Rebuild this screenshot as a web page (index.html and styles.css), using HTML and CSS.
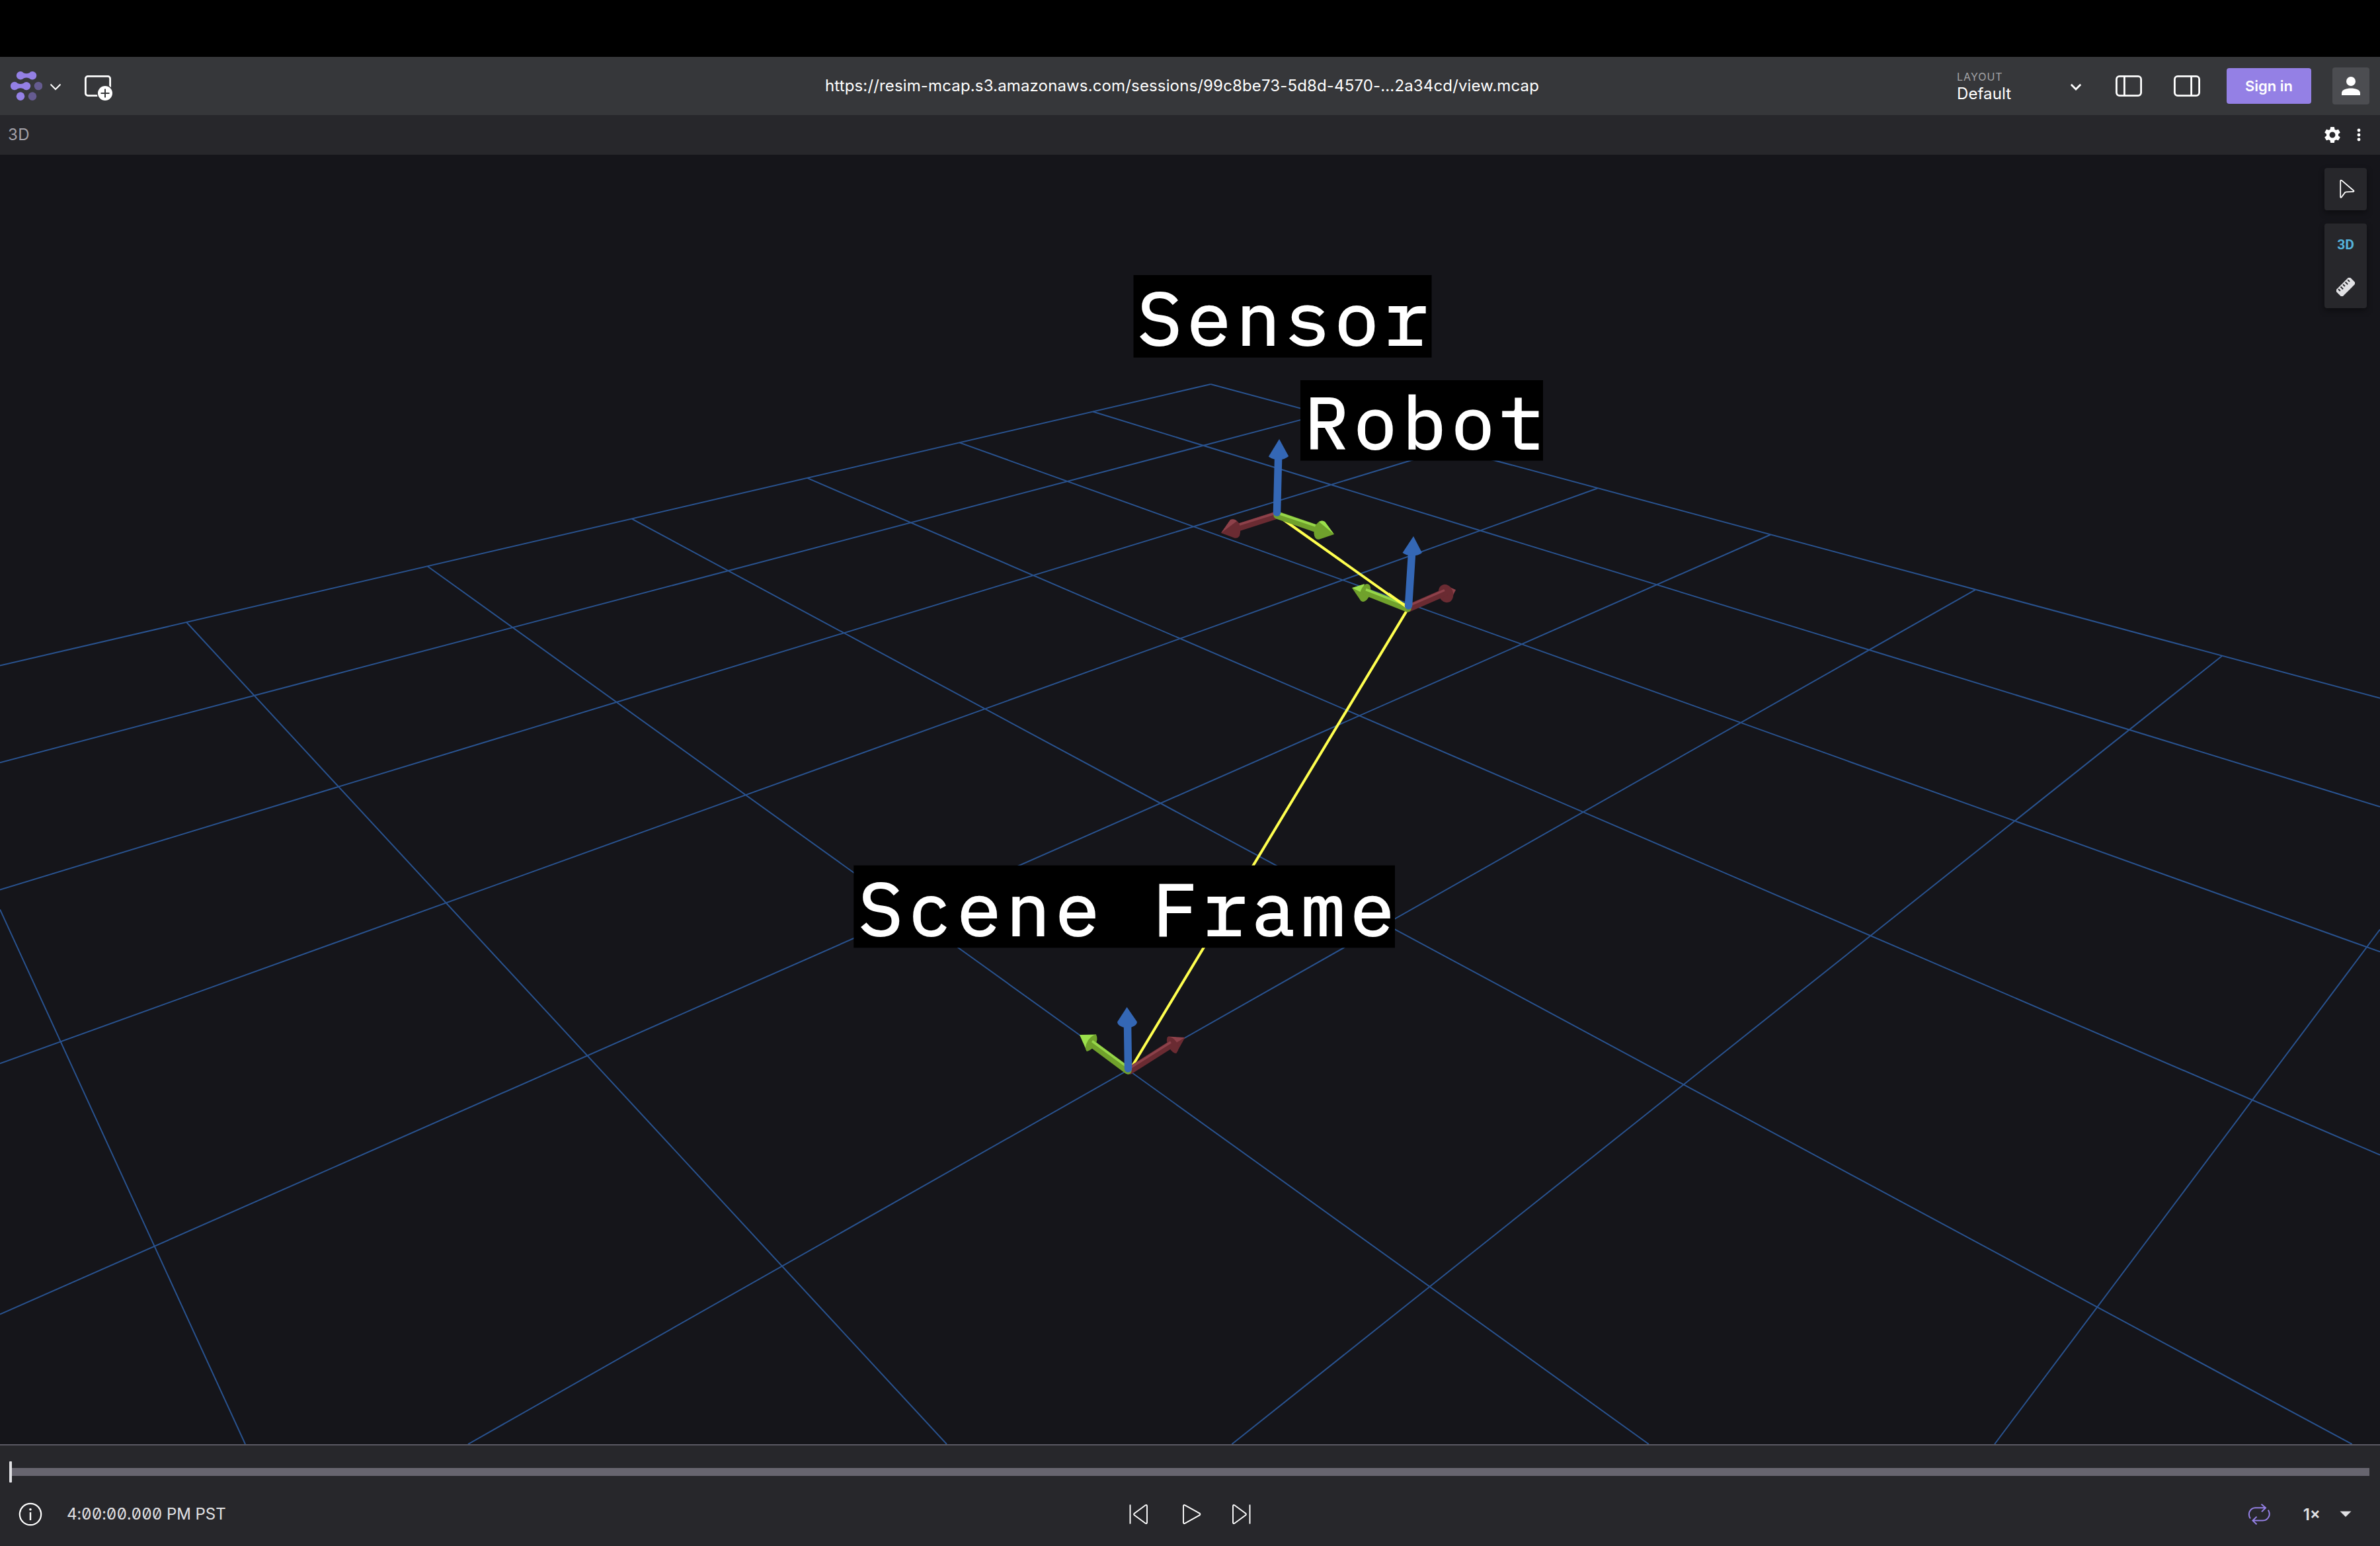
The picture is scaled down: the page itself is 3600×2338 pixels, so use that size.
FILE: index.html
```html
<!DOCTYPE html>
<html lang="en">
<head>
<meta charset="utf-8">
<title>3D view</title>
<link rel="stylesheet" href="styles.css">
</head>
<body>
<div class="app">
  <header class="appbar">
    <div class="appbar-start">
      <svg class="logo" width="48" height="44" viewBox="0 0 48 44">
        <g fill="#9480e5">
          <path d="M15 0a6.2 6.2 0 0 1 4.600 2.200q4.400 2 8.800 0a6.200 6.200 0 1 1 0 8.200q-4.400-2-8.800 0A6.200 6.200 0 1 1 15 0z"/>
          <path d="M6 15.800a6.200 6.200 0 0 1 4.600 2.200q4.400 2 8.800 0a6.200 6.200 0 1 1 0 8.200q-4.400-2-8.800 0A6.200 6.200 0 1 1 6 15.800z"/>
          <circle cx="15" cy="37.600" r="6.300"/>
        </g>
        <g fill="#655b90"><circle cx="42" cy="22" r="6.300"/><circle cx="33" cy="37.600" r="6.300"/></g>
      </svg>
      <svg class="logo-chevron" width="18" height="12" viewBox="0 0 18 12"><path d="M1.500 1.500 9 9 16.500 1.500" fill="none" stroke="#fff" stroke-width="2"/></svg>
      <svg class="add-panel" width="42" height="38" viewBox="0 0 42 38">
        <rect x="1.400" y="1.400" width="37.200" height="29.200" rx="3.500" fill="none" stroke="#fff" stroke-width="2.800"/>
        <circle cx="31" cy="27" r="12.500" fill="#36373a"/><circle cx="31" cy="27" r="11" fill="#fff"/>
        <path d="M31 20.500v13M24.500 27h13" stroke="#36373a" stroke-width="2"/>
      </svg>
    </div>
    <div class="source">https://resim-mcap.s3.amazonaws.com/sessions/99c8be73-5d8d-4570-...2a34cd/view.mcap</div>
    <div class="appbar-end">
      <div class="layout-menu">
        <div class="layout-text"><span class="layout-caption">LAYOUT</span><span class="layout-name">Default</span></div>
        <svg width="18" height="12" viewBox="0 0 18 12"><path d="M1.800 1.800 9 9 16.200 1.800" fill="none" stroke="#fff" stroke-width="2.800"/></svg>
      </div>
      <svg class="side-icon" width="40" height="32" viewBox="0 0 40 32"><rect x="1.400" y="1.400" width="37.200" height="29.200" rx="4.500" fill="none" stroke="#fff" stroke-width="2.800"/><path d="M13.400 1v30" stroke="#fff" stroke-width="2.800"/></svg>
      <svg class="side-icon" width="40" height="32" viewBox="0 0 40 32"><rect x="1.400" y="1.400" width="37.200" height="29.200" rx="4.500" fill="none" stroke="#fff" stroke-width="2.800"/><path d="M26.600 1v30" stroke="#fff" stroke-width="2.800"/></svg>
      <button class="sign-in">Sign in</button>
      <div class="avatar"><svg width="28" height="28" viewBox="0 0 28 28" fill="#fff"><circle cx="14" cy="7" r="7"/><path d="M0 28v-3.500C0 20 7 17.500 14 17.500S28 20 28 24.500V28z"/></svg></div>
    </div>
  </header>

  <div class="panel-bar">
    <span class="panel-title">3D</span>
    <div class="panel-actions">
      <svg width="30" height="30" viewBox="0 0 24 24" fill="#fff"><path d="M19.140 12.940c.04-.3.060-.610.060-.940 0-.320-.020-.640-.070-.940l2.030-1.580a.49.49 0 0 0 .120-.610l-1.920-3.320a.488.488 0 0 0-.590-.220l-2.390.960c-.5-.380-1.030-.700-1.620-.940l-.360-2.540a.484.484 0 0 0-.480-.410h-3.840c-.240 0-.430.170-.470.410l-.360 2.540c-.590.240-1.130.570-1.620.940l-2.390-.960c-.220-.080-.470 0-.590.220L2.740 8.870c-.120.210-.080.470.120.610l2.030 1.580c-.05.300-.090.630-.090.940s.020.640.070.940l-2.030 1.580a.49.49 0 0 0-.120.610l1.920 3.320c.120.220.370.290.590.220l2.390-.960c.5.380 1.030.700 1.620.940l.360 2.540c.05.240.240.410.480.410h3.840c.240 0 .440-.170.470-.410l.360-2.540c.590-.240 1.130-.560 1.620-.940l2.390.960c.220.080.470 0 .590-.220l1.920-3.320c.120-.220.070-.470-.120-.610zM12 15.600A3.610 3.610 0 0 1 8.400 12c0-1.980 1.620-3.600 3.600-3.600s3.600 1.620 3.600 3.600-1.620 3.600-3.600 3.600"/></svg>
      <svg width="6" height="20" viewBox="0 0 6 20" fill="#fff"><circle cx="3" cy="3" r="2.400"/><circle cx="3" cy="10" r="2.400"/><circle cx="3" cy="17" r="2.400"/></svg>
    </div>
  </div>

  <main class="viewport">
    <svg class="scene" viewBox="0 234 3600 1950">
      <g class="grid">
        <path d="M1831.300 581 3600 1055.800"/>
        <path d="M1653.100 622.500 3600 1220"/>
        <path d="M1451.300 669.400 3600 1439.400"/>
        <path d="M1221 722.900 3600 1746.700"/>
        <path d="M955.700 784.700 3557.700 2184"/>
        <path d="M646.800 856.500 2494 2184"/>
        <path d="M282.300 941.300 1432 2184"/>
        <path d="M0 1375.400 371 2184"/>
        <path d="M1831.300 581 0 1006.600"/>
        <path d="M2000.100 626.400 0 1153.200"/>
        <path d="M2193.400 678.300 0 1345.500"/>
        <path d="M2416.900 738.300 0 1608.200"/>
        <path d="M2678.200 808.500 0 1987.500"/>
        <path d="M2988 891.800 708 2184"/>
        <path d="M3361 992 1863.300 2184"/>
        <path d="M3600 1405.700 3017 2184"/>
      </g>
      <path class="link" d="M1933 780 2130 920 1708 1620"/>

      <g class="sensor-axes">
        <path class="red shaft" d="M1931 779 1872 798"/><path class="red lit" d="M1931 775.500 1872 794"/>
        <path class="red head" d="M1847 806 1861 786Q1868 783 1874 791Q1878 800 1875 810Q1872 815 1867 813.500z"/>
        <path class="red-top" d="M1847 806 1861 786Q1867 784 1871 788z"/>
        <path class="green shaft" d="M1932 779 1990 799"/><path class="green lit" d="M1933 776 1990 795"/>
        <path class="green head" d="M2018 808 2004 789Q1997 785 1991 793Q1986 801 1988 810Q1990 817 1996 815.500z"/>
        <path class="green-top" d="M2018 808 2004 789Q2000 786 1995 789z"/>
        <path class="blue shaft" d="M1931.500 775 1933.600 692"/>
        <path class="blue head" d="M1935 664 1949.200 690Q1943 695 1934 695.500Q1925 695 1918.800 690.500z"/>
      </g>

      <g class="robot-axes">
        <path class="red-top" d="M2202 892 2184 884 2193 910z"/>
        <ellipse class="red head" cx="2187" cy="897.500" rx="11" ry="14" transform="rotate(-18 2187 897.500)"/>
        <path class="red shaft" d="M2130 920 2185 896"/><path class="red lit" d="M2131 916 2185 892.500"/>
        <path class="green-top" d="M2045 889 2064 883 2060 900z"/>
        <path class="green head" d="M2045 889 2059 909.500 2068 900z"/>
        <ellipse class="green head" cx="2065" cy="896.500" rx="7.500" ry="14" transform="rotate(18 2065 896.500)"/>
        <path class="green shaft" d="M2129 920 2066 895"/><path class="green lit" d="M2128 915.500 2066 891.500"/>
        <path class="link" d="M2100 898 2128 918"/>
        <path class="blue shaft" d="M2130.500 916 2135.500 838"/>
        <path class="blue head" d="M2138 811 2151 836Q2145 840.500 2136 840.500Q2127 840 2121.500 836z"/>
      </g>

      <g class="scene-axes">
        <path class="red-top" d="M1792.500 1569 1767 1567.500 1775 1585z"/>
        <path class="red head" d="M1792.500 1569 1779 1593 1770 1582z"/>
        <path class="red head" d="M1766 1568Q1773 1567 1779 1575Q1786 1585 1779 1593Q1774 1593 1768 1584Q1763 1574 1766 1568z"/>
        <path class="red shaft" d="M1709 1619 1772 1579"/><path class="red lit" d="M1710 1614.500 1771 1576"/>
        <path class="green-top" d="M1633 1565 1658 1564.500 1644 1590z"/>
        <path class="green head" d="M1658 1564.500Q1662 1572 1656 1581Q1650 1589 1644 1590Q1639 1585 1646 1573Q1652 1565 1658 1564.500z"/>
        <path class="green shaft" d="M1706 1619 1651 1578"/><path class="green lit" d="M1706 1614 1652 1574.500"/>
        <path class="blue shaft" d="M1706.500 1616 1705.500 1548"/>
        <path class="blue head" d="M1704.600 1523 1720 1545.500Q1719 1553 1705 1554.500Q1691 1553 1690 1545.500z"/>
      </g>

      <g class="labels">
        <rect x="1714.500" y="416" width="451" height="124.700"/>
        <text x="1720.500" y="521.500" class="label">Sensor</text>
        <rect x="1967" y="575" width="367" height="121.600"/>
        <text x="1973.500" y="678.500" class="label label-far">Robot</text>
        <rect x="1291.300" y="1308.700" width="818.700" height="124.600"/>
        <text x="1298.500" y="1414.500" class="label label-scene">Scene Frame</text>
      </g>
    </svg>

    <div class="tools">
      <div class="tool-group">
        <div class="tool"><svg class="cursor" width="24" height="30" viewBox="0 0 24 30"><path d="M2.200 2.600v24.200q.3 1.700 1.500.400l5.500-7.300q.5-.600 1.400-.600l10.800-.500q1.800-.4.600-1.600L4.100 1.900Q2.500.9 2.200 2.600z" fill="none" stroke="#fff" stroke-width="1.800" stroke-linejoin="round"/></svg></div>
      </div>
      <div class="tool-group">
        <div class="tool tool-active">3D</div>
        <div class="tool"><svg width="28" height="28" viewBox="0 0 28 28"><g transform="rotate(-45 14 14)"><rect x="-1" y="7" width="30" height="14" rx="2.500" fill="#e1e1e4"/><path d="M4 6.500v6M9 6.500v7M14 6.500v6M19 6.500v7M24 6.500v6" stroke="#27272b" stroke-width="2"/><path d="M1 7.700h26" stroke="#e1e1e4" stroke-width="1.600"/></g></svg></div>
      </div>
    </div>
  </main>

  <footer class="playback">
    <div class="scrubber"><div class="playhead"></div><div class="track"></div></div>
    <div class="controls">
      <div class="controls-start">
        <svg width="36" height="36" viewBox="0 0 36 36"><circle cx="18" cy="18" r="16.200" fill="none" stroke="#fff" stroke-width="2.200"/><path d="M18 15v12" stroke="#fff" stroke-width="2.400"/><circle cx="18" cy="10.700" r="1.800" fill="#fff"/></svg>
        <span class="time">4:00:00.000 PM PST</span>
      </div>
      <div class="transport">
        <svg width="32" height="32" viewBox="0 0 32 32"><path d="M2.500 1.500v29M28 3.500v25q-.3 2.200-2.300 1.200L8.800 17.300q-1.500-1.300 0-2.600L25.700 2.300q2-1 2.300 1.200z"/></svg>
        <svg class="play" width="32" height="32" viewBox="0 0 32 32"><path d="M3 3.500v25q.3 2.200 2.500 1.200l22-12.300q1.800-1.400 0-2.800l-22-12.300Q3.300 1.300 3 3.500z"/></svg>
        <svg width="32" height="32" viewBox="0 0 32 32"><path d="M29.500 1.500v29M4 3.500v25q.3 2.200 2.300 1.200l16.900-12.400q1.500-1.300 0-2.600L6.300 2.300q-2-1-2.300 1.200z"/></svg>
      </div>
      <div class="controls-end">
        <svg width="34" height="32" viewBox="0 0 34 32" fill="none" stroke="#9480e5" stroke-width="2"><path d="M3.900 22.500Q.7 18 2.500 12.500 5.200 6.200 11.500 6.200H27M20.500.8 27 6.200l-6 6M30.700 9.700q3 4 1.600 9Q29.500 25.600 22.500 25.600H8M13.500 19.600 7.500 25.600l6 5.700"/></svg>
        <span class="speed">1×</span>
        <svg width="18" height="10" viewBox="0 0 18 10"><path d="M.5.500h17L9 9z" fill="#e1e1e4"/></svg>
      </div>
    </div>
  </footer>
</div>
</body>
</html>
```
FILE: styles.css
```css
* { box-sizing: border-box; }
body {
  margin: 0;
  background: #000;
  color: #fff;
  font-family: Inter, "Liberation Sans", sans-serif;
  font-size: 24px;
}
svg { display: block; flex: none; }
.app {
  width: 3600px;
  height: 2338px;
  padding-top: 86px;
  display: flex;
  flex-direction: column;
  overflow: hidden;
}
.appbar {
  height: 88px;
  flex: none;
  background: #36373a;
  display: grid;
  grid-template-columns: 1fr auto 1fr;
  align-items: center;
}
.appbar-start { display: flex; align-items: center; padding-left: 16px; }
.logo-chevron { margin: 3px 35px 0 11px; }
.add-panel { margin-top: 6px; }
.source { white-space: nowrap; padding-right: 24px; line-height: 30px; letter-spacing: .145px; }
.appbar-end { display: flex; align-items: center; justify-content: flex-end; padding-right: 16px; }
.layout-menu { display: flex; align-items: center; justify-content: space-between; width: 189px; margin-right: 51px; }
.layout-menu svg { margin-top: 3px; }
.layout-text { display: flex; flex-direction: column; padding-top: 1px; }
.layout-caption { font-size: 16px; line-height: 20px; letter-spacing: 1px; color: #a5a5a8; margin-top: 1px; }
.layout-name { line-height: 30px; padding-top: 1px; letter-spacing: .1px; }
.side-icon { margin-right: 48px; }
.side-icon + .side-icon { margin-right: 40px; }
.sign-in {
  width: 128px;
  height: 54px;
  margin-right: 32px;
  padding: 0;
  border: 0;
  border-radius: 4px;
  background: #9480e5;
  color: #fff;
  font: 600 22px/54px Inter, "Liberation Sans", sans-serif;
}
.avatar {
  width: 56px;
  height: 56px;
  border-radius: 4px;
  background: #4c4d51;
  display: flex;
  align-items: center;
  justify-content: center;
}
.panel-bar {
  height: 60px;
  flex: none;
  background: #27272b;
  color: #a3a2a9;
  display: flex;
  align-items: center;
  justify-content: space-between;
  padding: 0 29px 0 12px;
}
.panel-title { padding-bottom: 1px; letter-spacing: .4px; }
.panel-actions { display: flex; align-items: center; gap: 22px; }
.viewport { flex: 1; min-height: 0; position: relative; background: #15151a; }
.scene { width: 3600px; height: 1950px; }
.grid path { fill: none; stroke: #29528e; stroke-width: 2; }
.link { fill: none; stroke: #ffff4f; stroke-width: 4; }
.shaft { fill: none; stroke-width: 11.500; stroke-linecap: round; }
.lit { fill: none; stroke-width: 3.500; }
.red { stroke: #6a2b32; }
.red.lit { stroke: #8d414a; }
.red-top { fill: #8d414a; }
.green { stroke: #70a12c; }
.green.lit { stroke: #96d649; }
.green-top { fill: #9be04c; }
.blue { stroke: #3467b5; }
.head { stroke: none; }
.red.head { fill: #6a2b32; }
.green.head { fill: #70a12c; }
.blue.head { fill: #3467b5; }
.labels rect { fill: #000; }
.label {
  fill: #fff;
  stroke: #fff;
  stroke-width: 2px;
  font-family: "IBM Plex Mono", "Liberation Mono", monospace;
  font-size: 112px;
  letter-spacing: 7.300px;
  white-space: pre;
}
.label-far { font-size: 109px; letter-spacing: 8.500px; }
.label-scene { letter-spacing: 7.150px; }
.tools { position: absolute; top: 20px; right: 20px; display: flex; flex-direction: column; gap: 20px; }
.tool-group { width: 64px; border-radius: 4px; background: #27272b; box-shadow: 0 4px 10px rgba(0, 0, 0, .4); }
.tool { height: 64px; display: flex; align-items: center; justify-content: center; }
.cursor { margin-left: 4px; }
.tool-active { color: #55b3dc; font: 700 21px Roboto, "Liberation Sans", sans-serif; }
.playback { height: 154px; flex: none; background: #27272b; border-top: 2px solid #5a5963; }
.scrubber { height: 80px; display: flex; align-items: center; padding: 0 16px 0 14px; }
.playhead { width: 4px; height: 32px; border-radius: 1px; background: #e1e1e4; }
.track { flex: 1; height: 12px; background: #67656f; }
.controls {
  height: 48px;
  display: grid;
  grid-template-columns: 1fr auto 1fr;
  align-items: center;
  color: #e1e1e4;
}
.controls-start { display: flex; align-items: center; gap: 37px; padding-left: 28px; }
.time { font-feature-settings: "zero", "tnum"; padding-bottom: 1px; letter-spacing: .05px; }
.transport { display: flex; gap: 48px; padding-right: 1px; }
.transport path { fill: none; stroke: #fff; stroke-width: 1.900; }
.play { margin-right: -6px; }
.controls-end { display: flex; align-items: center; justify-content: flex-end; padding-right: 43px; }
.speed { font-weight: 600; margin: 0 29px 0 50px; }
```
